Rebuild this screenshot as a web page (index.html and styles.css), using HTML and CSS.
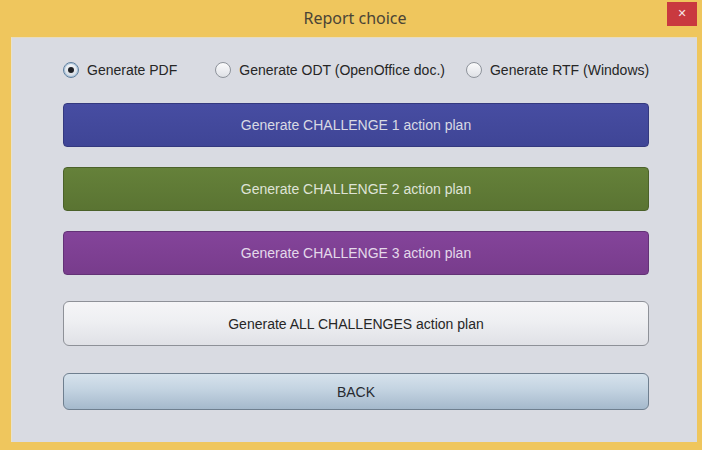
FILE: index.html
```html
<!DOCTYPE html>
<html lang="en">
<head>
<meta charset="utf-8">
<title>Report choice</title>
<link rel="stylesheet" href="styles.css">
</head>
<body>
<div class="window">
  <header class="titlebar">
    <span class="spacer"></span>
    <h1 class="title">Report choice</h1>
    <button class="close" type="button" aria-label="Close">&#x2715;</button>
  </header>
  <main class="content">
    <div class="formats">
      <label class="radio"><span class="dot checked"></span>Generate PDF</label>
      <label class="radio"><span class="dot"></span>Generate ODT (OpenOffice doc.)</label>
      <label class="radio"><span class="dot"></span>Generate RTF (Windows)</label>
    </div>
    <div class="actions">
      <button class="btn btn-blue" type="button">Generate CHALLENGE 1 action plan</button>
      <button class="btn btn-green" type="button">Generate CHALLENGE 2 action plan</button>
      <button class="btn btn-purple" type="button">Generate CHALLENGE 3 action plan</button>
      <button class="btn btn-light btn-all" type="button">Generate ALL CHALLENGES action plan</button>
      <button class="btn btn-back" type="button">BACK</button>
    </div>
  </main>
</div>
</body>
</html>
```
FILE: styles.css
```css
* { box-sizing: border-box; }

html, body {
  margin: 0;
  width: 702px;
  height: 450px;
  overflow: hidden;
  background: #efc65d;
}

.window {
  display: flex;
  flex-direction: column;
  height: 450px;
  background: #efc65d;
}

/* title bar */
.titlebar {
  display: grid;
  grid-template-columns: 1fr auto 1fr;
  align-items: start;
  height: 37px;
  padding-right: 4px;
}

.title {
  margin: 0;
  padding-top: 8px;
  padding-left: 12px;
  font: 400 16px/21px "Noto Sans", "Liberation Sans", sans-serif;
  color: #4a4436;
}

.close {
  justify-self: end;
  width: 30px;
  height: 24px;
  margin-top: 2px;
  margin-right: 1px;
  border: 0;
  background: #c9393f;
  color: #f6e6e6;
  font: 700 11px/24px "DejaVu Sans", sans-serif;
  padding: 0;
}

/* dialog body */
.content {
  flex: 1;
  margin: 0 5px 8px 11px;
  background: #d9dbe2;
  border-top: 1px solid #e6dcc0;
  border-left: 1px solid #e9e2cc;
  padding: 22px 48px 0 51px;
  font-family: "Liberation Sans", Arial, sans-serif;
}

.formats {
  display: flex;
  align-items: center;
  height: 20px;
  font-size: 14px;
  color: #262626;
  white-space: nowrap;
}

.radio {
  display: flex;
  align-items: center;
  flex-shrink: 0;
  gap: 8px;
}

.radio + .radio { margin-left: 38px; }
.radio:nth-child(3) { margin-left: 21px; }

.dot {
  position: relative;
  flex-shrink: 0;
  width: 16px;
  height: 16px;
  border-radius: 50%;
  border: 1px solid #8e939b;
  background: linear-gradient(#fbfbfc, #dfe1e6);
}

.dot.checked {
  border-color: #5f7f9e;
  box-shadow: 0 0 0 1px #a9c3da inset;
  background: linear-gradient(#f2f4f7, #d5dbe3);
}

.dot.checked::after {
  content: "";
  position: absolute;
  left: 4px;
  top: 4px;
  width: 6px;
  height: 6px;
  border-radius: 50%;
  background: #1d1f24;
}

/* action buttons */
.actions {
  display: flex;
  flex-direction: column;
  margin-top: 23px;
}

.btn {
  display: block;
  width: 586px;
  height: 44px;
  margin: 0 0 20px 0;
  border-radius: 4px;
  font: 400 14px/1 "Liberation Sans", Arial, sans-serif;
  color: #d9dae4;
  text-align: center;
  padding: 0;
}

.btn-blue {
  background: linear-gradient(#474da2, #3f4596);
  border: 1px solid #34397f;
}

.btn-green {
  background: linear-gradient(#65813a, #5a7432);
  border: 1px solid #4b612a;
  color: #dfe3d6;
}

.btn-purple {
  background: linear-gradient(#84449a, #783c8c);
  border: 1px solid #633276;
  color: #e4d9ea;
  margin-bottom: 26px;
}

.btn-light {
  height: 45px;
  color: #262626;
  background: linear-gradient(#f5f5f7 0%, #eeeff2 45%, #e0e1e6 100%);
  border: 1px solid #8e9198;
  border-radius: 6px;
  margin-bottom: 27px;
}

.btn-back {
  height: 37px;
  color: #262a30;
  background: linear-gradient(#d6e2ec 0%, #c3d3e1 45%, #a5b9cc 100%);
  border: 1px solid #6f7f8f;
  border-radius: 6px;
  margin-bottom: 0;
}
```
